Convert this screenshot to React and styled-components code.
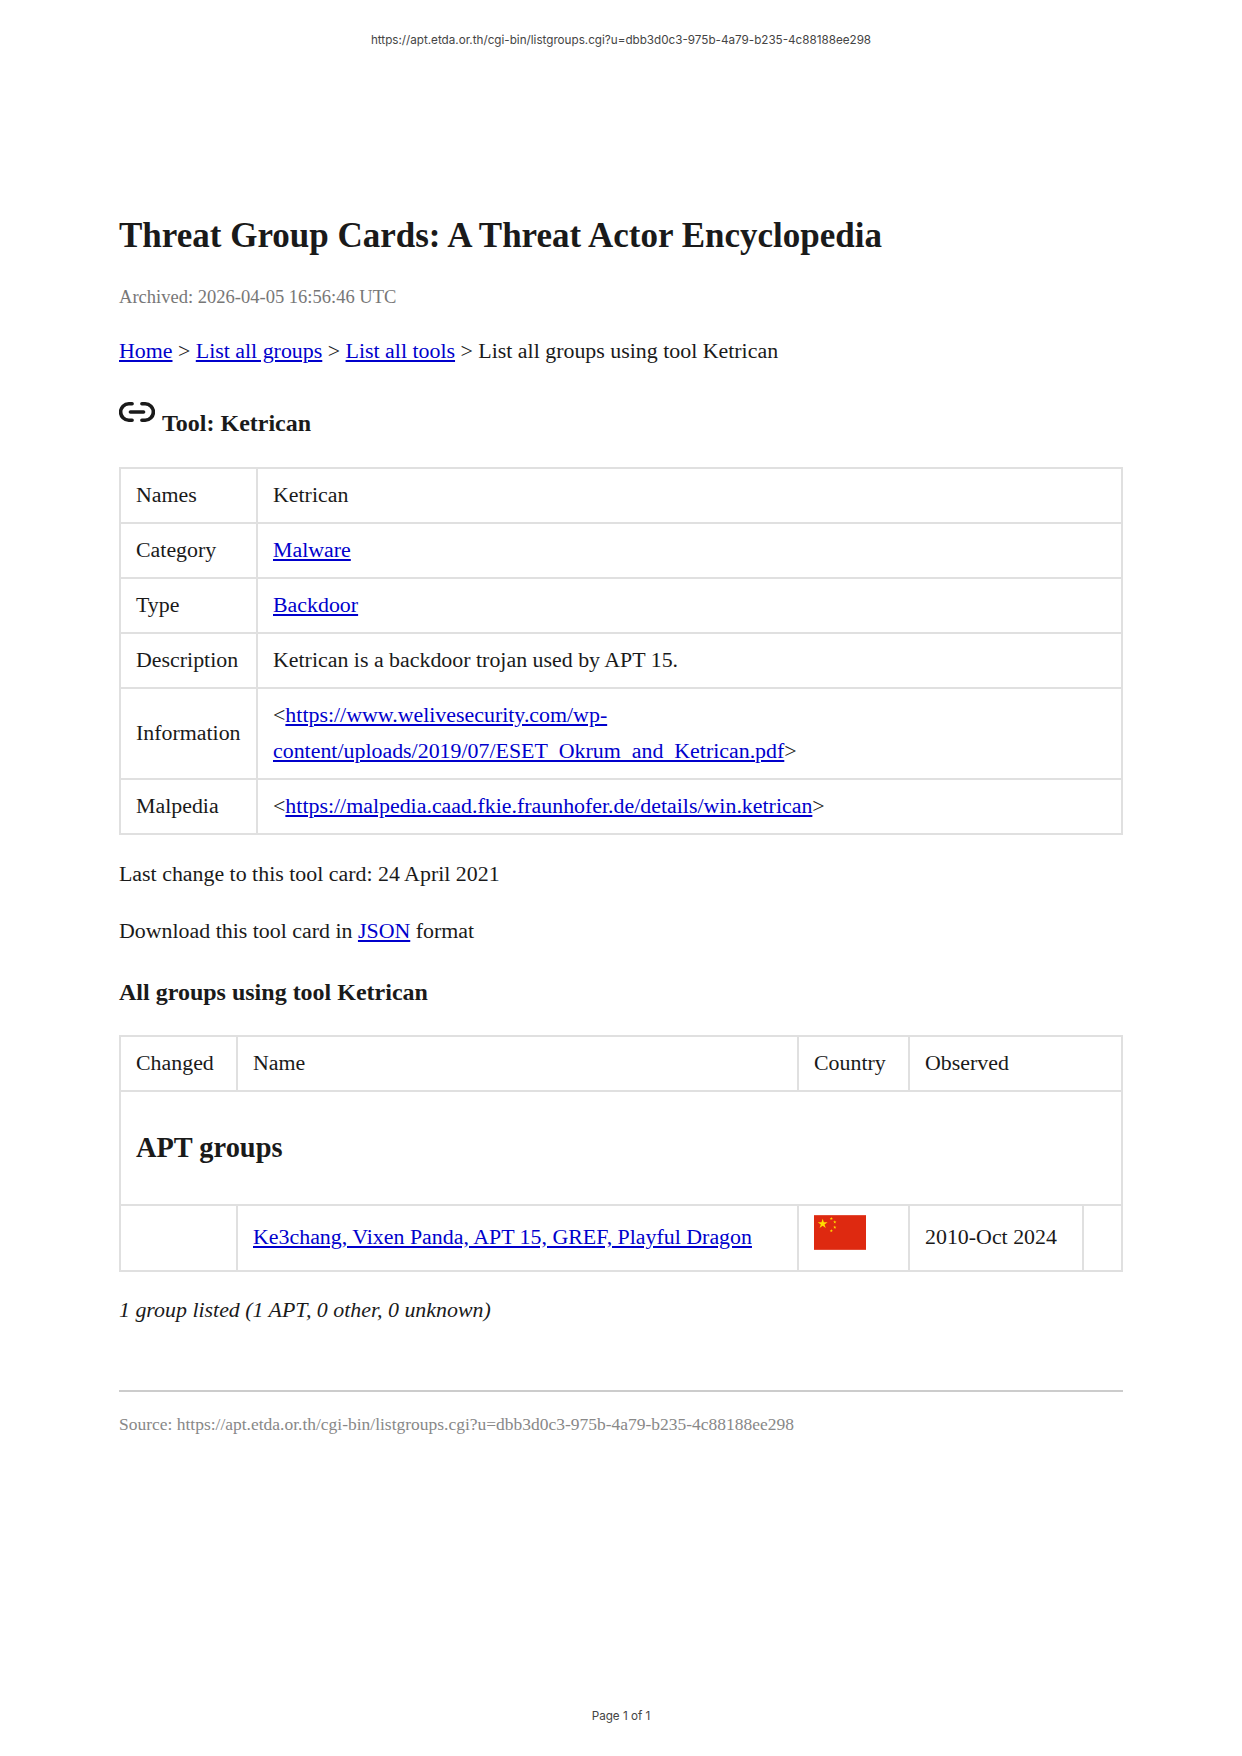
import React from 'react';
import styled, { createGlobalStyle } from 'styled-components';

const GlobalStyle = createGlobalStyle`
  html, body {
    margin: 0;
    padding: 0;
    background: #fff;
  }
`;

const Page = styled.div`
  width: 1242px;
  height: 1756px;
  display: flex;
  flex-direction: column;
  font-family: "Liberation Serif", serif;
  font-size: 21.9px;
  line-height: 36px;
  color: #1a1a1a;
  overflow: hidden;
`;

const RunningText = styled.div`
  font-family: "Inter", sans-serif;
  font-size: 11.68px;
  line-height: 14px;
  text-align: center;
  color: #444;
`;

const UrlLine = styled(RunningText)`
  padding-top: 33px;
`;

const PageNumber = styled(RunningText)`
  margin-top: auto;
  padding-bottom: 33px;
`;

const Content = styled.main`
  padding: 167px 119px 0;
`;

const Title = styled.h1`
  margin: 0;
  font-size: 35px;
  line-height: 44px;
  font-weight: bold;
`;

const Archived = styled.p`
  margin: 25px 0 0;
  font-size: 18.55px;
  line-height: 28px;
  color: #777;
`;

const Paragraph = styled.p`
  margin: ${(p) => p.$top || 21}px 0 0;
`;

const Link = styled.a`
  color: #0000cc;
  text-decoration: underline;
`;

const ToolHeading = styled.h2`
  margin: 36px 0 0;
  font-size: 24px;
  line-height: 36px;
  font-weight: bold;
  display: flex;
  align-items: flex-start;
  gap: 7px;
`;

const LinkIcon = styled.svg`
  width: 36px;
  height: 20px;
  margin-top: -3px;
  flex: none;
`;

const Table = styled.table`
  width: 100%;
  margin-top: ${(p) => p.$top || 25}px;
  border-collapse: collapse;
  table-layout: fixed;
`;

const Cell = styled.td`
  border: 2px solid #e0e0e0;
  padding: 7.5px 15px 9.5px;
  vertical-align: middle;
  text-align: left;
`;

const SubHeading = styled.h3`
  margin: 25px 0 0;
  font-size: 24px;
  line-height: 36px;
  font-weight: bold;
`;

const GroupHeading = styled.div`
  font-size: 28.4px;
  line-height: 36px;
  font-weight: bold;
  padding: 30px 0 28.5px;
`;

const FlagCell = styled(Cell)`
  padding-top: 9px;
  padding-bottom: 20px;
  line-height: 0;
  vertical-align: top;
`;

const Flag = styled.svg`
  width: 52px;
  height: 35px;
  display: block;
`;

const Summary = styled.p`
  margin: 20px 0 0;
  font-style: italic;
`;

const Rule = styled.hr`
  margin: 62px 0 0;
  border: none;
  border-top: 2px solid #ccc;
`;

const Source = styled.p`
  margin: 18px 0 0;
  font-size: 17.48px;
  line-height: 28px;
  color: #888;
`;

const toolRows = [
  ['Names', 'Ketrican'],
  ['Category', <Link href="#">Malware</Link>],
  ['Type', <Link href="#">Backdoor</Link>],
  ['Description', 'Ketrican is a backdoor trojan used by APT 15.'],
  ['Information', <>&lt;<Link href="#">https://www.welivesecurity.com/wp-content/uploads/2019/07/ESET_Okrum_and_Ketrican.pdf</Link>&gt;</>],
  ['Malpedia', <>&lt;<Link href="#">https://malpedia.caad.fkie.fraunhofer.de/details/win.ketrican</Link>&gt;</>],
];

const star = (cx, cy, r) => {
  const pts = [];
  for (let i = 0; i < 10; i++) {
    const a = -Math.PI / 2 + (i * Math.PI) / 5;
    const d = i % 2 ? r * 0.38 : r;
    pts.push(`${cx + d * Math.cos(a)},${cy + d * Math.sin(a)}`);
  }
  return pts.join(' ');
};

export default function App() {
  return (
    <Page>
      <GlobalStyle />
      <UrlLine>https://apt.etda.or.th/cgi-bin/listgroups.cgi?u=dbb3d0c3-975b-4a79-b235-4c88188ee298</UrlLine>
      <Content>
        <Title>Threat Group Cards: A Threat Actor Encyclopedia</Title>
        <Archived>Archived: 2026-04-05 16:56:46 UTC</Archived>
        <Paragraph $top={22}>
          <Link href="#">Home</Link> &gt; <Link href="#">List all groups</Link> &gt; <Link href="#">List all tools</Link> &gt; List all groups using tool Ketrican
        </Paragraph>
        <ToolHeading>
          <LinkIcon viewBox="1 6 22 12" fill="none" stroke="#1a1a1a" strokeWidth="2.2" strokeLinecap="round">
            <path d="M9 17H7A5 5 0 0 1 7 7h2" />
            <path d="M15 7h2a5 5 0 1 1 0 10h-2" />
            <line x1="8" y1="12" x2="16" y2="12" />
          </LinkIcon>
          Tool: Ketrican
        </ToolHeading>
        <Table $top={26}>
          <colgroup>
            <col style={{ width: '137px' }} />
            <col />
          </colgroup>
          <tbody>
            {toolRows.map((row) => (
              <tr key={row[0]}>
                <Cell>{row[0]}</Cell>
                <Cell>{row[1]}</Cell>
              </tr>
            ))}
          </tbody>
        </Table>
        <Paragraph>Last change to this tool card: 24 April 2021</Paragraph>
        <Paragraph>Download this tool card in <Link href="#">JSON</Link> format</Paragraph>
        <SubHeading>All groups using tool Ketrican</SubHeading>
        <Table>
          <colgroup>
            <col style={{ width: '117px' }} />
            <col style={{ width: '561px' }} />
            <col style={{ width: '111px' }} />
            <col style={{ width: '174px' }} />
            <col />
          </colgroup>
          <tbody>
            <tr>
              <Cell>Changed</Cell>
              <Cell>Name</Cell>
              <Cell>Country</Cell>
              <Cell colSpan={2}>Observed</Cell>
            </tr>
            <tr>
              <Cell colSpan={5}><GroupHeading>APT groups</GroupHeading></Cell>
            </tr>
            <tr>
              <Cell />
              <Cell><Link href="#">Ke3chang, Vixen Panda, APT 15, GREF, Playful Dragon</Link></Cell>
              <FlagCell>
                <Flag viewBox="0 0 30 20">
                  <rect width="30" height="20" fill="#de2910" />
                  <polygon points={star(5, 5, 3)} fill="#ffde00" />
                  <polygon points={star(10, 2, 1)} fill="#ffde00" />
                  <polygon points={star(12, 4, 1)} fill="#ffde00" />
                  <polygon points={star(12, 7, 1)} fill="#ffde00" />
                  <polygon points={star(10, 9, 1)} fill="#ffde00" />
                </Flag>
              </FlagCell>
              <Cell>2010-Oct 2024</Cell>
              <Cell />
            </tr>
          </tbody>
        </Table>
        <Summary>1 group listed (1 APT, 0 other, 0 unknown)</Summary>
        <Rule />
        <Source>Source: https://apt.etda.or.th/cgi-bin/listgroups.cgi?u=dbb3d0c3-975b-4a79-b235-4c88188ee298</Source>
      </Content>
      <PageNumber>Page 1 of 1</PageNumber>
    </Page>
  );
}
